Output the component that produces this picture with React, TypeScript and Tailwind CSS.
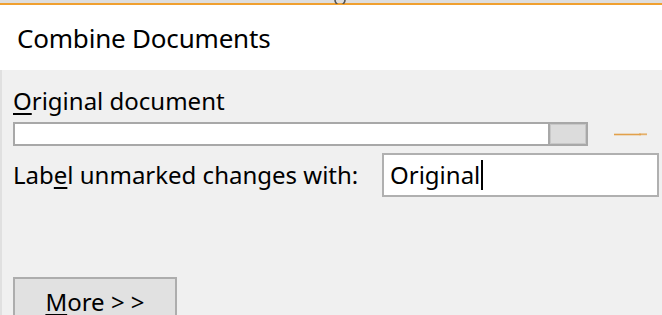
import React from "react";

const font = { fontFamily: '"Noto Sans", "Open Sans", sans-serif' };

export default function App() {
  return (
    <div
      className="relative w-[662px] h-[315px] overflow-hidden bg-[#f0f0f0] text-black"
      style={font}
    >
      {/* top strip */}
      <div className="h-[3px] bg-[#dedede]" />
      <div className="h-[2px] bg-[#f0a030]" />
      <svg className="absolute left-[333px] top-0" width="14" height="4" viewBox="0 0 14 4">
        <path d="M2 0 A5 5 0 0 0 12 0" fill="none" stroke="#555" strokeWidth="1.6" />
      </svg>

      {/* title */}
      <div className="h-[65px] bg-white pl-[17px] pt-[20px]">
        <div className="text-[26px] leading-none tracking-[-0.2px]">Combine Documents</div>
      </div>

      {/* body */}
      <div className="border-l-2 border-[#e0e0e0] pl-[11px] pt-[19px] pr-[3px]">
        <div className="text-[24px] leading-none">
          <span className="underline underline-offset-[3px] decoration-[1.5px]">O</span>riginal document
        </div>

        <div className="mt-[9px] flex items-center">
          <div className="flex h-[24px] w-[575px] border-2 border-[#a8a8a8] bg-white">
            <div className="flex-1" />
            <div className="w-[38px] border-l-2 border-[#a8a8a8] bg-[#dcdcdc] shadow-[inset_0_0_0_1px_#c8c8c8]" />
          </div>
          <svg className="ml-[26px]" width="34" height="6" viewBox="0 0 34 6">
            <path d="M0 3.5 H27" stroke="#e2a04a" strokeWidth="1.6" />
            <path d="M25 2.4 H33 V4.2 H25 Z" fill="#e2a04a" opacity="0.8" />
          </svg>
        </div>

        <div className="mt-[7px] flex items-center">
          <div className="w-[369px] text-[24px] leading-none">
            Lab<span className="underline underline-offset-[3px] decoration-[1.5px]">e</span>l unmarked changes with:
          </div>
          <div className="flex h-[44px] w-[277px] items-center border-2 border-[#b0b0b0] bg-white pl-[6px]">
            <span className="text-[24px] leading-none">Original</span>
            <span className="ml-[1px] h-[30px] w-[2px] bg-black" />
          </div>
        </div>

        <div className="mt-[80px] flex h-[50px] w-[164px] items-start justify-center border-2 border-[#adadad] bg-[#e1e1e1] pt-[11px]">
          <span className="text-[24px] leading-none">
            <span className="underline underline-offset-[3px] decoration-[3px]">M</span>ore &gt; &gt;
          </span>
        </div>
      </div>
    </div>
  );
}
